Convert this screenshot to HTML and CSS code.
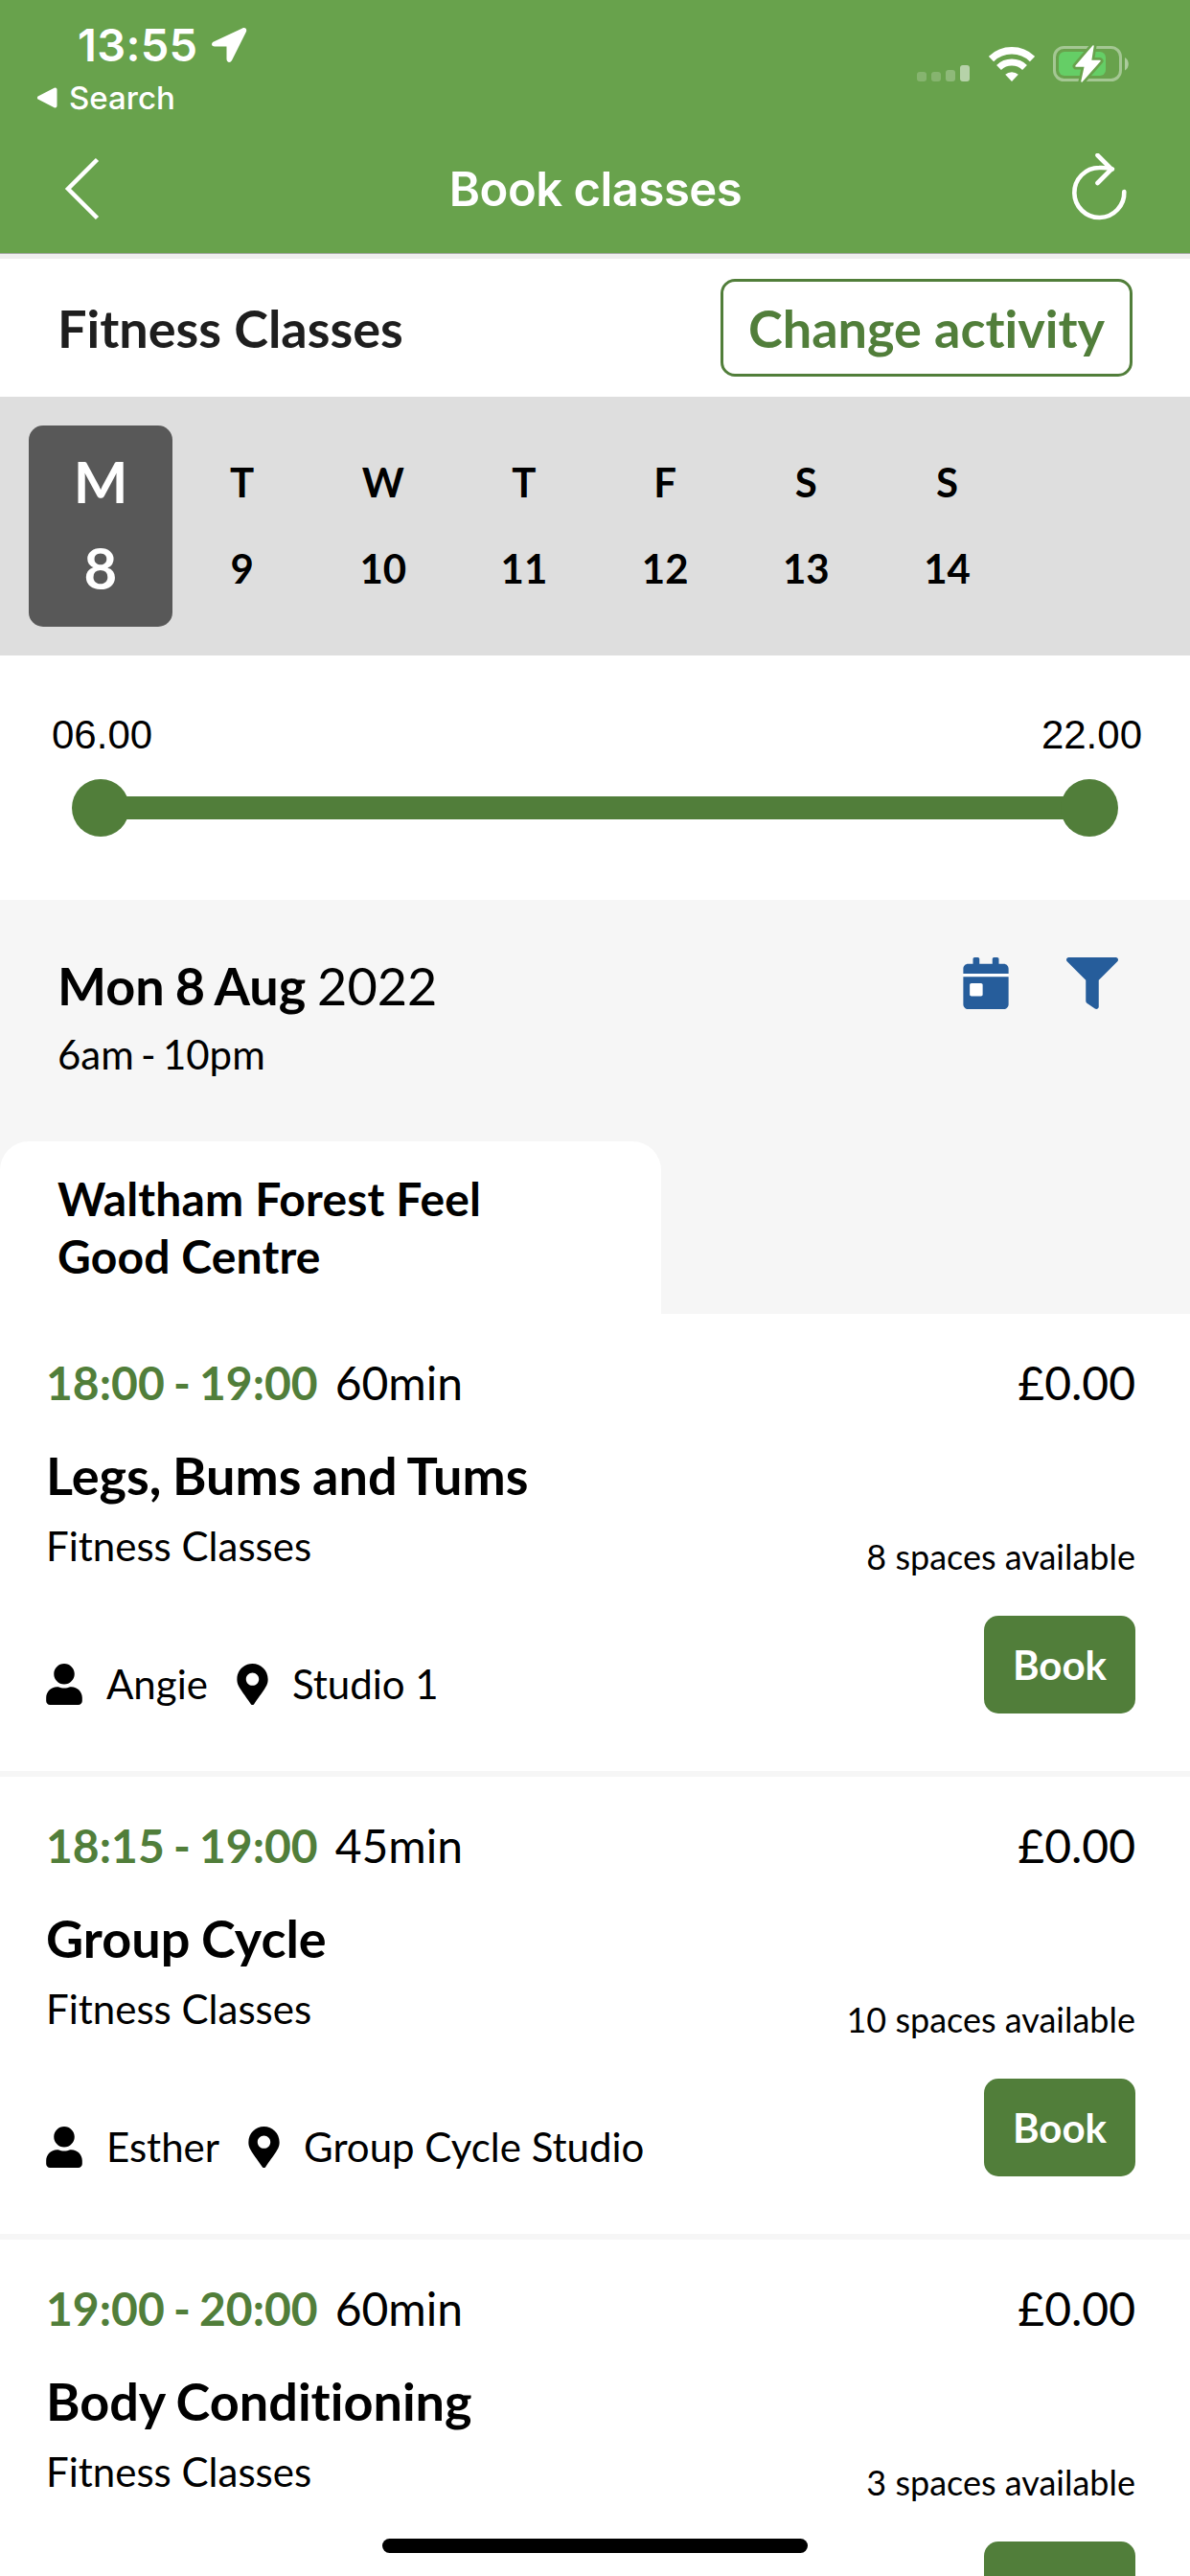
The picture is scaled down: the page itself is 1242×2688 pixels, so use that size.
FILE: index.html
```html
<!DOCTYPE html>
<html lang="en">
<head>
  <meta charset="UTF-8" />
  <meta name="viewport" content="width=device-width, initial-scale=1.0" />
  <title>Book classes</title>
  <link rel="stylesheet" href="styles.css">
</head>
<body>
  <!-- shared icons -->
  <svg class="sprite" xmlns="http://www.w3.org/2000/svg">
    <symbol id="icon-user" viewBox="0 0 448 512">
      <path d="M224 256c70.7 0 128-57.3 128-128S294.7 0 224 0 96 57.3 96 128s57.3 128 128 128zm89.6 32h-16.7c-22.2 10.2-46.9 16-72.9 16s-50.6-5.8-72.9-16h-16.7C60.2 288 0 348.2 0 422.4V464c0 26.5 21.5 48 48 48h352c26.5 0 48-21.5 48-48v-41.6c0-74.2-60.2-134.4-134.4-134.4z"/>
    </symbol>
    <symbol id="icon-marker" viewBox="0 0 384 512">
      <path d="M172.268 501.67C26.97 291.031 0 269.413 0 192 0 85.961 85.961 0 192 0s192 85.961 192 192c0 77.413-26.97 99.031-172.268 309.67-9.535 13.774-29.93 13.773-39.464 0zM192 272c44.183 0 80-35.817 80-80s-35.817-80-80-80-80 35.817-80 80 35.817 80 80 80z"/>
    </symbol>
  </svg>

  <header class="header">
    <div class="status-bar">
      <div class="status-left">
        <div class="clock">
          <span>13:55</span>
          <svg class="location" viewBox="0 0 38 38" width="38" height="38">
            <path d="M33 1.500 3 15.500c-3 1.500-2.500 5 1 5h12.500v13c0 4 4 4.500 5.500 1.500L37 5c1-2.500-1-5-4-3.500z" fill="#fff"/>
          </svg>
        </div>
        <div class="back-app">
          <svg viewBox="0 0 22 22" width="22" height="22">
            <path d="M3 11 19.500 2.500v17z" fill="#fff" stroke="#fff" stroke-width="4" stroke-linejoin="round"/>
          </svg>
          <span>Search</span>
        </div>
      </div>
      <div class="status-right">
        <svg class="signal" viewBox="0 0 55 38" width="55" height="38" fill="#fff">
          <rect x="0" y="27" width="10" height="10" rx="3" opacity=".2"/>
          <rect x="15" y="27" width="10" height="10" rx="3" opacity=".2"/>
          <rect x="30" y="25" width="10" height="12" rx="3" opacity=".25"/>
          <rect x="45" y="20" width="10" height="17" rx="3" opacity=".52"/>
        </svg>
        <svg class="wifi" viewBox="0 0 48 38" width="48" height="38" fill="none" stroke="#fff">
          <path d="M2.500 13.500a31 31 0 0 1 43 0" stroke-width="7.500"/>
          <path d="M10.500 22.500a19.500 19.500 0 0 1 27 0" stroke-width="7"/>
          <path d="M24 37l-6.800-7.200a10 10 0 0 1 13.600 0z" fill="#fff" stroke="none"/>
        </svg>
        <svg class="battery" viewBox="0 0 80 40" width="80" height="40">
          <rect x="1.500" y="2.500" width="69" height="34" rx="10" fill="none" stroke="#fff" stroke-opacity=".4" stroke-width="3"/>
          <path d="M75 13c5 2.500 5 11 0 13.500z" fill="#fff" fill-opacity=".45"/>
          <rect x="6" y="7" width="49" height="25" rx="6" fill="#65ce66"/>
          <path d="M42 1 24 22h9.500L30 38l19-21.500h-9.500z" fill="#fff" stroke="#68a24c" stroke-width="7" stroke-linejoin="round"/>
          <path d="M42 1 24 22h9.500L30 38l19-21.500h-9.500z" fill="#fff" stroke="#fff" stroke-width="1.500" stroke-linejoin="round"/>
        </svg>
      </div>
    </div>
    <div class="nav-bar">
      <svg viewBox="0 1 38 68" width="38" height="68">
        <path d="M35.500 3.500 5 34l30.500 30.500" fill="none" stroke="#fff" stroke-width="4.500"/>
      </svg>
      <h1 class="nav-title">Book classes</h1>
      <svg viewBox="0 0 60 76" width="60" height="76" fill="none" stroke="#fff" stroke-width="4.600" stroke-linecap="round" stroke-linejoin="round">
        <path d="M55.300 40A26 26 0 1 1 29.300 15Q36 14.600 43 16.500"/>
        <path d="M27.500 2 42 16.500 27.500 31"/>
      </svg>
    </div>
  </header>

  <section class="activity">
    <h2 class="activity-name">Fitness Classes</h2>
    <button class="change-btn">Change activity</button>
  </section>

  <section class="days">
    <div class="day selected"><span>M</span><span>8</span></div>
    <div class="day"><span>T</span><span>9</span></div>
    <div class="day"><span>W</span><span>10</span></div>
    <div class="day"><span>T</span><span>11</span></div>
    <div class="day"><span>F</span><span>12</span></div>
    <div class="day"><span>S</span><span>13</span></div>
    <div class="day"><span>S</span><span>14</span></div>
  </section>

  <section class="hours">
    <div class="hours-labels"><span>06.00</span><span>22.00</span></div>
    <div class="slider">
      <div class="thumb"></div>
      <div class="track"></div>
      <div class="thumb"></div>
    </div>
  </section>

  <section class="summary">
    <div class="summary-top">
      <div>
        <p class="date"><strong>Mon 8 Aug</strong> 2022</p>
        <p class="range">6am - 10pm</p>
      </div>
      <div class="tools">
        <svg viewBox="0 0 448 512" width="48" height="54">
          <path fill="#fff" d="M0 160h448v40H0zM50 240h156v160H50z"/>
          <path d="M0 464c0 26.500 21.500 48 48 48h352c26.500 0 48-21.500 48-48V192H0v272zm64-192c0-8.800 7.200-16 16-16h96c8.800 0 16 7.200 16 16v96c0 8.800-7.200 16-16 16H80c-8.800 0-16-7.200-16-16v-96zM400 64h-48V16c0-8.800-7.200-16-16-16h-32c-8.800 0-16 7.200-16 16v48H160V16c0-8.800-7.200-16-16-16h-32c-8.800 0-16 7.200-16 16v48H48C21.500 64 0 85.500 0 112v48h448v-48c0-26.500-21.500-48-48-48z"/>
        </svg>
        <svg viewBox="0 0 512 512" width="54" height="54">
          <path d="M487.976 0H24.028C2.710 0-8.047 25.866 7.058 40.971L192 225.941V432c0 7.831 3.821 15.170 10.237 19.662l80 55.980C298.020 518.690 320 507.493 320 487.980V225.941l184.947-184.970C520.021 25.896 509.338 0 487.976 0z"/>
        </svg>
      </div>
    </div>
    <div class="tab">Waltham Forest Feel<br>Good Centre</div>
  </section>

  <main class="classes">
    <article class="class-card">
      <div class="class-info">
        <p class="time"><strong>18:00 - 19:00</strong><span>60min</span></p>
        <h3 class="class-name">Legs, Bums and Tums</h3>
        <p class="category">Fitness Classes</p>
        <div class="meta">
          <svg class="user" width="38" height="43"><use href="#icon-user"/></svg>
          <span>Angie</span>
          <svg class="marker" width="33" height="43"><use href="#icon-marker"/></svg>
          <span>Studio 1</span>
        </div>
      </div>
      <div class="class-side">
        <p class="price">£0.00</p>
        <p class="spaces">8 spaces available</p>
        <button class="book-btn">Book</button>
      </div>
    </article>

    <article class="class-card">
      <div class="class-info">
        <p class="time"><strong>18:15 - 19:00</strong><span>45min</span></p>
        <h3 class="class-name">Group Cycle</h3>
        <p class="category">Fitness Classes</p>
        <div class="meta">
          <svg class="user" width="38" height="43"><use href="#icon-user"/></svg>
          <span>Esther</span>
          <svg class="marker" width="33" height="43"><use href="#icon-marker"/></svg>
          <span>Group Cycle Studio</span>
        </div>
      </div>
      <div class="class-side">
        <p class="price">£0.00</p>
        <p class="spaces">10 spaces available</p>
        <button class="book-btn">Book</button>
      </div>
    </article>

    <article class="class-card">
      <div class="class-info">
        <p class="time"><strong>19:00 - 20:00</strong><span>60min</span></p>
        <h3 class="class-name">Body Conditioning</h3>
        <p class="category">Fitness Classes</p>
      </div>
      <div class="class-side">
        <p class="price">£0.00</p>
        <p class="spaces">3 spaces available</p>
        <button class="book-btn">Book</button>
      </div>
    </article>
  </main>

  <div class="home-indicator"></div>
</body>
</html>
```
FILE: styles.css
```css
* {
  box-sizing: border-box;
}

body {
  margin: 0;
  width: 1242px;
  height: 2688px;
  overflow: hidden;
  background: #fff;
  color: #000;
  font-family: Lato, sans-serif;
  font-size: 42px;
  font-variant-ligatures: none;
}

h1, h2, h3, p {
  margin: 0;
}

svg {
  display: block;
  flex-shrink: 0;
}

button {
  font-family: inherit;
  font-weight: bold;
  font-variant-ligatures: none;
  padding: 0;
  border-radius: 15px;
}

.sprite {
  display: none;
}

/* Header */
.header {
  height: 265px;
  background: #68a24c;
  border-bottom: 1px solid #a5a9a3;
  color: #fff;
  font-family: Inter, sans-serif;
}

.status-bar {
  height: 132px;
  display: flex;
  justify-content: space-between;
  padding: 24px 64px 0 38px;
}

.clock {
  display: flex;
  align-items: center;
  gap: 14px;
  height: 46px;
  padding-left: 43px;
  font-size: 47px;
  font-weight: 600;
  letter-spacing: 0.3px;
  line-height: 46px;
}

.back-app {
  display: flex;
  align-items: center;
  gap: 12px;
  margin-top: 14px;
  font-size: 33px;
  font-weight: 500;
  line-height: 36px;
}

.status-right {
  display: flex;
  padding-top: 24px;
}

.wifi {
  margin-left: 20px;
}

.battery {
  margin: -1px -1px 0 19px;
}

.nav-bar {
  height: 132px;
  display: flex;
  align-items: center;
  justify-content: space-between;
  padding: 0 64px 0 66px;
}

.nav-title {
  margin-left: 21px;
  font-size: 49px;
  font-weight: 600;
  letter-spacing: -0.5px;
  line-height: 60px;
}

/* Activity */
.activity {
  height: 149px;
  display: flex;
  align-items: center;
  justify-content: space-between;
  padding: 0 60px;
  border-top: 5px solid #efefef;
}

.activity-name {
  color: #1e1e1e;
  font-size: 54px;
}

.change-btn {
  width: 430px;
  height: 102px;
  border: 3px solid #517e3a;
  background: #fff;
  color: #517e3a;
  font-size: 54px;
}

/* Day picker */
.days {
  height: 270px;
  display: flex;
  padding: 30px;
  background: #dedede;
}

.day {
  width: 147.2px;
  display: flex;
  flex-direction: column;
  padding-top: 14px;
  text-align: center;
  font-weight: bold;
  line-height: 90px;
}

.selected {
  width: 150px;
  margin-right: -1px;
  padding-top: 13px;
  border-radius: 15px;
  background: #585858;
  color: #fff;
  font-size: 60px;
}

/* Hours slider */
.hours {
  height: 255px;
  padding-top: 59px;
}

.hours-labels {
  display: flex;
  justify-content: space-between;
  padding: 0 50px 0 54px;
  font-family: "Liberation Sans", Arial, sans-serif;
  line-height: 48px;
}

.slider {
  display: flex;
  align-items: center;
  margin-top: 22px;
  padding: 0 75px;
}

.thumb {
  width: 60px;
  height: 60px;
  border-radius: 50%;
  background: #517e3a;
}

.track {
  flex: 1;
  height: 24px;
  margin: 0 -10px;
  background: #517e3a;
}

/* Date and centre */
.summary {
  height: 432px;
  padding-top: 60px;
  background: #f6f6f6;
}

.summary-top {
  height: 192px;
  display: flex;
  justify-content: space-between;
  padding: 0 75px 0 60px;
}

.date {
  font-size: 54px;
  line-height: 60px;
  word-spacing: -2px;
}

.range {
  margin-top: 16px;
  line-height: 50px;
  word-spacing: -3.5px;
}

.tools {
  display: flex;
  gap: 60px;
  fill: #265d9b;
}

.tab {
  width: 690px;
  height: 180px;
  padding: 30px 60px 0;
  border-radius: 30px 30px 0 0;
  background: #fff;
  font-size: 48px;
  font-weight: bold;
  letter-spacing: 0.15px;
  line-height: 60px;
}

/* Class list */
.class-card {
  height: 483px;
  display: flex;
  justify-content: space-between;
  padding: 42px 57px 0 48px;
  border-bottom: 6px solid #f6f6f6;
}

.time {
  font-size: 48px;
  line-height: 60px;
}

.time strong {
  margin-right: 18px;
  color: #517e3a;
  word-spacing: -2.5px;
}

.class-name {
  margin-top: 37px;
  font-size: 54px;
  line-height: 60px;
  word-spacing: -1.5px;
}

.category {
  margin-top: 19px;
  line-height: 48px;
}

.meta {
  display: flex;
  align-items: center;
  margin-top: 96px;
  line-height: 48px;
}

.user {
  margin-right: 25px;
}

.marker {
  margin: 0 25px 0 30px;
}

.class-side {
  display: flex;
  flex-direction: column;
  align-items: flex-end;
}

.price {
  font-size: 48px;
  line-height: 60px;
}

.spaces {
  margin-top: 129px;
  font-size: 36px;
  line-height: 44px;
}

.book-btn {
  width: 158px;
  height: 102px;
  margin-top: 40px;
  border: none;
  background: #517e3a;
  color: #fff;
  font-size: 42px;
}

.home-indicator {
  position: fixed;
  bottom: 24px;
  left: 399px;
  width: 444px;
  height: 15px;
  border-radius: 8px;
  background: #000;
}
```
